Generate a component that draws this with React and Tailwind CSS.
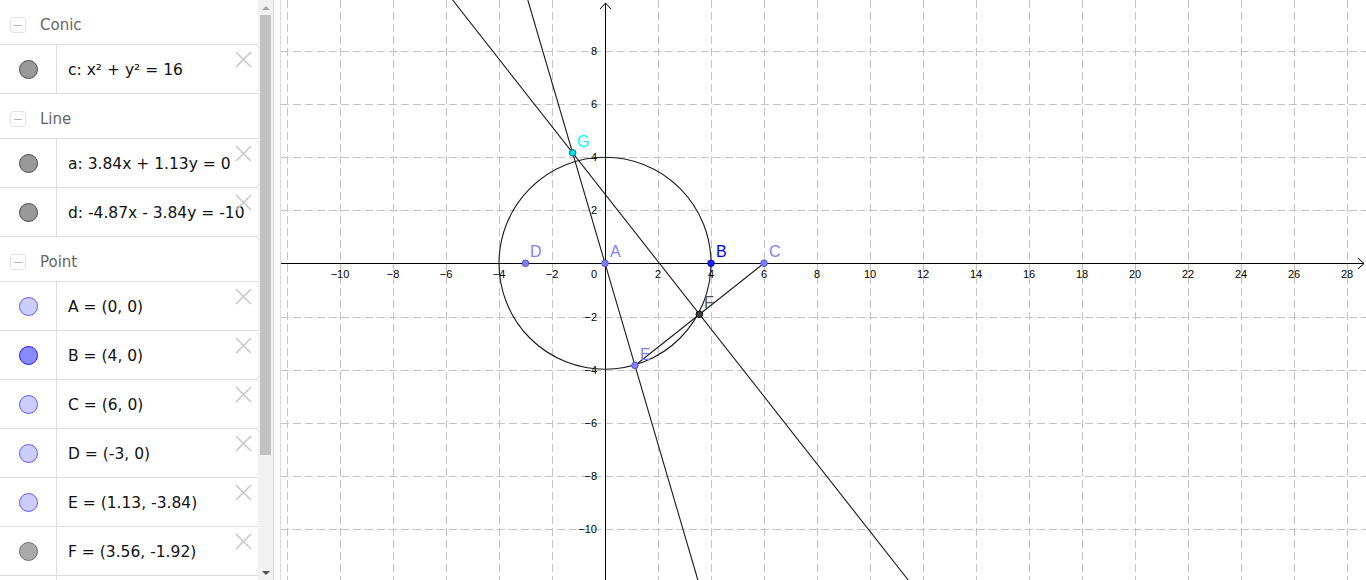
import React from "react";

const SX = 26.5;
const SY = 26.6;
const OX = 605;
const OY = 263.3;
const sx = (x) => OX + x * SX;
const sy = (y) => OY - y * SY;

const rows = [
  { type: "header", label: "Conic" },
  { type: "item", text: "c: x² + y² = 16", fill: "#999999", border: "#4a4a4a" },
  { type: "header", label: "Line" },
  { type: "item", text: "a: 3.84x + 1.13y = 0", fill: "#999999", border: "#4a4a4a" },
  { type: "item", text: "d: -4.87x - 3.84y = -10", fill: "#999999", border: "#4a4a4a" },
  { type: "header", label: "Point" },
  { type: "item", text: "A = (0, 0)", fill: "#ccccff", border: "#5c5cff" },
  { type: "item", text: "B = (4, 0)", fill: "#8a8aff", border: "#1a1aff" },
  { type: "item", text: "C = (6, 0)", fill: "#ccccff", border: "#5c5cff" },
  { type: "item", text: "D = (-3, 0)", fill: "#ccccff", border: "#5c5cff" },
  { type: "item", text: "E = (1.13, -3.84)", fill: "#ccccff", border: "#5c5cff" },
  { type: "item", text: "F = (3.56, -1.92)", fill: "#aaaaaa", border: "#6e6e6e" },
  { type: "empty" },
];

function Header({ label }) {
  return (
    <div className="h-[45px] shrink-0 border-b border-[#dddddd] flex items-center pt-[6px]">
      <div className="ml-[10px] w-[16px] h-[16px] border border-[#e3e3e3] rounded-[3px] flex items-center justify-center">
        <div className="w-[8px] h-[1px] bg-[#b5b5b5]" />
      </div>
      <span className="ml-[14px] text-[15px] text-[#666666]" style={{ fontFamily: '"DejaVu Sans", sans-serif' }}>
        {label}
      </span>
    </div>
  );
}

function Item({ text, fill, border }) {
  return (
    <div className="relative h-[49px] shrink-0 border-b border-[#dddddd] flex">
      <div className="w-[57px] shrink-0 border-r border-[#dddddd] flex items-center justify-center">
        <div
          className="w-[19px] h-[19px] rounded-full border"
          style={{ backgroundColor: fill, borderColor: border }}
        />
      </div>
      <div
        className="flex-1 pl-[11px] pt-[4px] flex items-center whitespace-nowrap overflow-hidden text-[15.5px] text-[#111111]"
        style={{ fontFamily: '"DejaVu Sans", sans-serif' }}
      >
        {text}
      </div>
      <svg className="absolute right-[6px] top-[6px]" width="17" height="17" viewBox="0 0 17 17">
        <path d="M1 1 L16 16 M16 1 L1 16" stroke="#c8c8c8" strokeWidth="1.6" fill="none" />
      </svg>
    </div>
  );
}

function EmptyRow() {
  return (
    <div className="h-[49px] shrink-0 flex">
      <div className="w-[57px] shrink-0 border-r border-[#dddddd]" />
    </div>
  );
}

function Graph() {
  const vx = [];
  for (let k = -6; k <= 14; k++) if (k !== 0) vx.push(Math.round(OX + 53 * k) + 0.5);
  const hy = [];
  for (let k = -5; k <= 5; k++) {
    const y = Math.round(sy(2 * k)) + 0.5;
    if (k !== 0 && y > 0 && y < 580) hy.push(y);
  }
  const xLabels = [];
  for (let v = -10; v <= 28; v += 2) if (v !== 0) xLabels.push(v);
  const yLabels = [8, 6, 4, 2, -2, -4, -6, -8, -10];
  const fmt = (v) => (v < 0 ? "\u2212" + Math.abs(v) : String(v));

  const yTop = (OY - 0) / SY;
  const yBot = -(580 - OY) / SY;
  const ax = (y) => (-1.13 * y) / 3.84;
  const dx = (y) => (10 - 3.84 * y) / 4.87;

  const G = { x: -1.2225, y: 4.154 };
  const pts = [
    { x: -3, y: 0, f: "#8080ff", s: "#4848c8" },
    { x: 0, y: 0, f: "#8080ff", s: "#4848c8" },
    { x: 4, y: 0, f: "#1e1eff", s: "#0000a0" },
    { x: 6, y: 0, f: "#8080ff", s: "#4848c8" },
    { x: 1.13, y: -3.84, f: "#8080ff", s: "#4848c8" },
    { x: 3.56, y: -1.92, f: "#404040", s: "#000000" },
    { x: G.x, y: G.y, f: "#00e6e6", s: "#006060" },
  ];
  const labels = [
    { t: "D", x: 530, y: 257, c: "#8080ff" },
    { t: "A", x: 610, y: 257, c: "#8080ff" },
    { t: "B", x: 716, y: 257, c: "#0000ff" },
    { t: "C", x: 769, y: 257, c: "#8080ff" },
    { t: "G", x: 577, y: 147, c: "#00ffff" },
    { t: "E", x: 640, y: 360, c: "#8080ff" },
    { t: "F", x: 704, y: 308, c: "#555555" },
  ];

  return (
    <svg width="1085" height="580" viewBox="281 0 1085 580" className="block">
      <rect x="281" y="0" width="1085" height="580" fill="#ffffff" />
      <g stroke="#c4c4c4" strokeWidth="1" strokeDasharray="8 4" shapeRendering="crispEdges">
        {vx.map((x) => (
          <line key={"v" + x} x1={x} y1="0" x2={x} y2="580" />
        ))}
        {hy.map((y) => (
          <line key={"h" + y} x1="281" y1={y} x2="1366" y2={y} />
        ))}
      </g>
      <g stroke="#000" strokeWidth="1" fill="none">
        <line x1="281" y1="263.5" x2="1364" y2="263.5" shapeRendering="crispEdges" />
        <line x1="605.5" y1="3" x2="605.5" y2="580" shapeRendering="crispEdges" />
        <path d="M1358 258 L1364 263.5 L1358 269" />
        <path d="M600 9 L605.5 3 L611 9" />
      </g>
      <g fontFamily='"Liberation Sans", Arial, sans-serif' fontSize="11" fill="#000">
        {xLabels.map((v) => (
          <text key={"xl" + v} x={sx(v)} y="278" textAnchor="middle">
            {fmt(v)}
          </text>
        ))}
        <text x="597" y="278" textAnchor="end">
          0
        </text>
        {yLabels.map((v) => (
          <text key={"yl" + v} x="597" y={sy(v) + 4} textAnchor="end">
            {fmt(v)}
          </text>
        ))}
      </g>
      <g stroke="#1a1a1a" strokeWidth="1.1" fill="none">
        <circle cx={OX} cy={OY} r={4 * SX} />
        <line x1={sx(ax(yTop))} y1="0" x2={sx(ax(yBot))} y2="580" />
        <line x1={sx(dx(yTop))} y1="0" x2={sx(dx(yBot))} y2="580" />
        <line x1={sx(6)} y1={sy(0)} x2={sx(1.13)} y2={sy(-3.84)} />
      </g>
      {pts.map((p, i) => (
        <circle key={"p" + i} cx={sx(p.x)} cy={sy(p.y)} r="3.3" fill={p.f} stroke={p.s} strokeWidth="0.9" />
      ))}
      <g fontFamily='"Liberation Sans", Arial, sans-serif' fontSize="16">
        {labels.map((l) => (
          <text key={l.t} x={l.x} y={l.y} fill={l.c}>
            {l.t}
          </text>
        ))}
      </g>
    </svg>
  );
}

export default function App() {
  return (
    <div className="flex w-[1366px] h-[580px] overflow-hidden bg-white">
      <div className="w-[258px] shrink-0 h-[580px] flex flex-col overflow-hidden bg-white">
        {rows.map((r, i) =>
          r.type === "header" ? (
            <Header key={i} label={r.label} />
          ) : r.type === "empty" ? (
            <EmptyRow key={i} />
          ) : (
            <Item key={i} {...r} />
          )
        )}
      </div>
      <div className="w-[15px] shrink-0 h-[580px] bg-[#f1f1f1] flex flex-col items-center">
        <div className="h-[15px] w-full flex items-center justify-center">
          <div className="w-0 h-0 border-l-[4px] border-r-[4px] border-b-[4px] border-l-transparent border-r-transparent border-b-[#a3a3a3]" />
        </div>
        <div className="w-[11px] h-[440px] bg-[#c1c1c1]" />
        <div className="flex-1" />
        <div className="h-[15px] w-full flex items-center justify-center">
          <div className="w-0 h-0 border-l-[4px] border-r-[4px] border-t-[4px] border-l-transparent border-r-transparent border-t-[#505050]" />
        </div>
      </div>
      <div className="w-[8px] shrink-0 h-[580px] bg-[#fafafa] border-l border-r border-[#dcdcdc]" />
      <div className="flex-1 h-[580px] overflow-hidden">
        <Graph />
      </div>
    </div>
  );
}
